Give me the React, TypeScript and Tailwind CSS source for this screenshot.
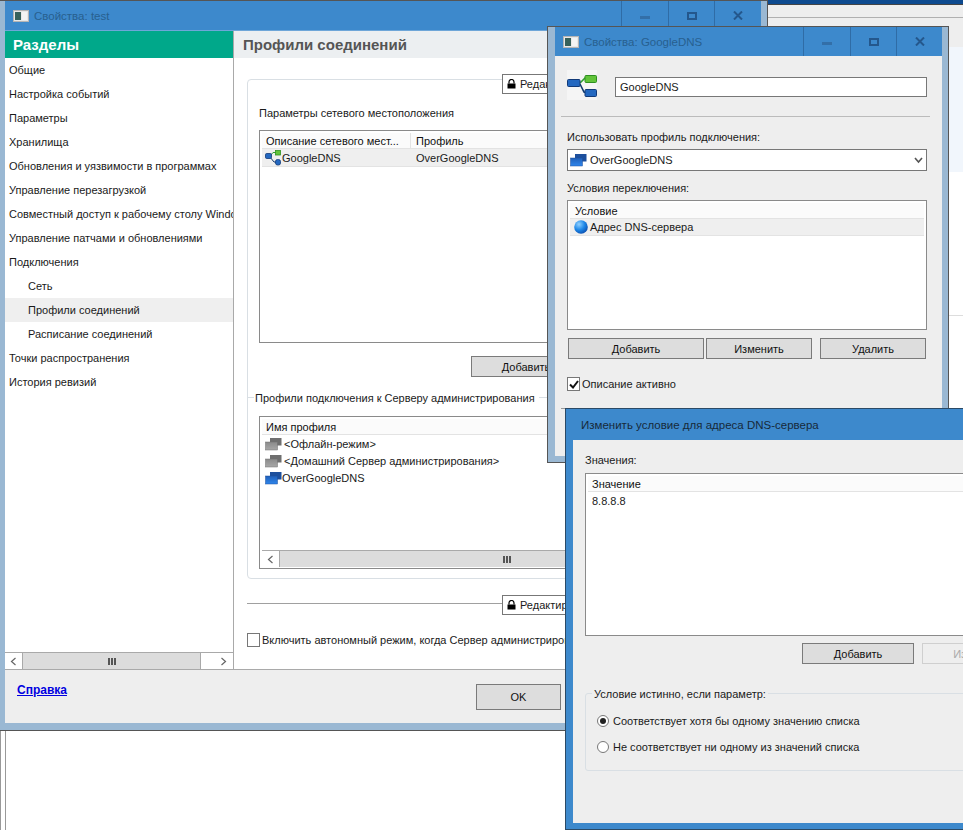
import type { ReactNode } from "react";

const font = "font-['Liberation_Sans','Noto_Sans',sans-serif]";

function NetIcon() {
  return (
    <svg width="16" height="16" viewBox="0 0 16 16" className="shrink-0">
      <path d="M5 6 L8 2.5 L11 2.5" fill="none" stroke="#2f9e2f" strokeWidth="1" />
      <path d="M5 7 L9 12 L11 12" fill="none" stroke="#123a6e" strokeWidth="1" />
      <rect x="0.5" y="3.5" width="6" height="5" rx="1.2" fill="#2468c0" stroke="#123a78" strokeWidth="0.8" />
      <rect x="10.5" y="0.5" width="5" height="4.5" fill="#62c43a" stroke="#2f8f22" strokeWidth="0.8" />
      <rect x="10.5" y="9.5" width="5" height="5.5" rx="2" fill="#2468c0" stroke="#123a78" strokeWidth="0.8" />
    </svg>
  );
}

function BigNetIcon() {
  return (
    <svg width="30" height="30" viewBox="0 0 30 30" className="shrink-0 bg-[#f5f5f5]">
      <path d="M13 13 L18 8 L20 8" fill="none" stroke="#2f9e2f" strokeWidth="1.6" />
      <path d="M13 14 L17 22 L20 23" fill="none" stroke="#123a6e" strokeWidth="1.6" />
      <rect x="0.5" y="9.5" width="12.5" height="7" rx="1" fill="#2468c0" stroke="#123a78" />
      <rect x="18" y="5.5" width="11.5" height="7" rx="1" fill="#62c43a" stroke="#2f8f22" />
      <rect x="18" y="19.5" width="11.5" height="7" rx="1" fill="#2468c0" stroke="#123a78" />
    </svg>
  );
}

function ProfileIcon({ gray = false }: { gray?: boolean }) {
  const id = gray ? "profile-gray" : "profile-blue";
  const back = gray ? "#6f6f6f" : "#1d4f9c";
  return (
    <svg width="17" height="14" viewBox="0 0 17 14" className="shrink-0">
      <defs>
        <linearGradient id={id} x1="0" y1="0" x2="0" y2="1">
          <stop offset="0%" stopColor={gray ? "#8a8a8a" : "#1f5fb8"} />
          <stop offset="100%" stopColor={gray ? "#a8a8a8" : "#2f86ec"} />
        </linearGradient>
      </defs>
      <rect x="5" y="1" width="11.5" height="7.5" fill={back} />
      <rect x="0.5" y="5" width="12" height="8" fill={`url(#${id})`} stroke={back} strokeWidth="0.5" />
    </svg>
  );
}

function Globe() {
  return (
    <svg width="14" height="14" viewBox="0 0 14 14" className="shrink-0">
      <defs>
        <radialGradient id="globe" cx="35%" cy="30%" r="75%">
          <stop offset="0%" stopColor="#8fd0ff" />
          <stop offset="55%" stopColor="#1e88e8" />
          <stop offset="100%" stopColor="#0b4fb0" />
        </radialGradient>
      </defs>
      <circle cx="7" cy="7" r="6.8" fill="url(#globe)" />
    </svg>
  );
}

function Lock() {
  return (
    <svg width="9" height="10" viewBox="0 0 9 10" className="shrink-0">
      <path d="M2 4.5V3a2.5 2.5 0 0 1 5 0v1.5" fill="none" stroke="#000" strokeWidth="1.2" />
      <rect x="0.5" y="4.5" width="8" height="5" fill="#000" />
    </svg>
  );
}

function Controls({ widths }: { widths: number[] }) {
  return (
    <div className="flex h-full">
      {["min", "max", "close"].map((kind, i) => (
        <div
          key={kind}
          style={{ width: widths[i] }}
          className="flex items-center justify-center border-l border-[#2f6ca6]"
        >
          {kind === "min" && <div className="mt-[3px] h-[3px] w-[10px] bg-[#336fa8]" />}
          {kind === "max" && <div className="h-[8px] w-[10px] border-2 border-[#24578c]" />}
          {kind === "close" && (
            <svg width="10" height="9" viewBox="0 0 10 9">
              <path d="M1 0.5 L9 8.5 M9 0.5 L1 8.5" stroke="#24578c" strokeWidth="2" />
            </svg>
          )}
        </div>
      ))}
    </div>
  );
}

function TitleIcon() {
  return (
    <div className="flex h-[12px] w-[16px] items-center gap-[1px] border border-[#b5b5b5] bg-[#e8e8e8] pl-[1px]">
      <div className="h-[8px] w-[6px] bg-[#37615a]" />
      <div className="h-[8px] w-[5px] bg-[#f4f4f4]" />
    </div>
  );
}

function Btn({ children, className = "" }: { children: ReactNode; className?: string }) {
  return (
    <div className={`flex shrink-0 items-center justify-center border border-[#7a7a7a] bg-[#dddddd] text-[#111] ${className}`}>
      {children}
    </div>
  );
}

function ListHead({ children, inset = "pl-[4px]" }: { children: ReactNode; inset?: string }) {
  return (
    <div className={`mx-[2px] mt-[2px] flex h-[16px] items-center border-b border-[#e3e3e3] bg-[#fbfbfb] text-[#111] ${inset}`}>
      {children}
    </div>
  );
}

function Arrow({ dir }: { dir: "l" | "r" }) {
  return (
    <svg width="7" height="9" viewBox="0 0 7 9">
      <path d={dir === "l" ? "M5.5 1 L1.5 4.5 L5.5 8" : "M1.5 1 L5.5 4.5 L1.5 8"} fill="none" stroke="#666" strokeWidth="1.2" />
    </svg>
  );
}

function Grip() {
  return (
    <div className="flex gap-[1px]">
      <div className="h-[7px] w-[2px] bg-[#555]" />
      <div className="h-[7px] w-[2px] bg-[#555]" />
      <div className="h-[7px] w-[2px] bg-[#555]" />
    </div>
  );
}

const sections = [
  "Общие",
  "Настройка событий",
  "Параметры",
  "Хранилища",
  "Обновления и уязвимости в программах",
  "Управление перезагрузкой",
  "Совместный доступ к рабочему столу Windows",
  "Управление патчами и обновлениями",
  "Подключения",
  "Сеть",
  "Профили соединений",
  "Расписание соединений",
  "Точки распространения",
  "История ревизий",
];

function MainWindow() {
  return (
    <div className="absolute left-0 top-0 flex h-[731px] w-[768px] flex-col border-r border-b border-t border-[#555] bg-[#9ab8d3] px-[5px] pb-[7px] pr-[6px]">
      <div className="flex h-[30px] shrink-0 items-center justify-between border-b border-[#6ea6d8] bg-[#3d89cc]">
        <div className="flex items-center gap-[5px] pl-[8px] text-[#28608f]">
          <TitleIcon />
          <span className="text-[11.5px]">Свойства: test</span>
        </div>
        <Controls widths={[47, 46, 47]} />
      </div>
      <div className="flex min-h-0 flex-1">
        <div className="flex w-[229px] shrink-0 flex-col border-r border-[#a9a9a9] bg-white">
          <div className="flex h-[27px] shrink-0 items-center bg-[#00a88a] pl-[8px] text-[15px] font-bold text-white">
            Разделы
          </div>
          <div className="min-h-0 flex-1 overflow-hidden">
            {sections.map((s, i) => (
              <div
                key={s}
                className={`flex h-[24px] items-center whitespace-nowrap ${i >= 9 && i <= 11 ? "pl-[23px]" : "pl-[4px]"} ${i === 10 ? "bg-[#efefef]" : ""}`}
              >
                {s}
              </div>
            ))}
          </div>
          <div className="flex h-[17px] shrink-0 items-center border-t border-[#a9a9a9]">
            <div className="flex w-[17px] justify-center"><Arrow dir="l" /></div>
            <div className="flex h-full w-[179px] items-center justify-center border-x border-[#a9a9a9] bg-[#dcdcdc]"><Grip /></div>
            <div className="w-[14px]" />
            <div className="flex w-[17px] justify-center"><Arrow dir="r" /></div>
          </div>
        </div>
        <div className="flex min-w-0 flex-1 flex-col bg-white">
          <div className="flex h-[27px] shrink-0 items-center bg-[#eceff1] pl-[9px] text-[15px] font-bold text-[#555]">
            Профили соединений
          </div>
          <div className="relative mx-[13px] mt-[21px] h-[500px] shrink-0 rounded-[4px] border border-[#d9dfe4] px-[11px]">
            <div className="absolute left-[254px] top-[-6px] flex h-[20px] w-[120px] items-center gap-[4px] border border-[#777] bg-white pl-[4px]">
              <Lock />
              <span>Редактировать</span>
            </div>
            <div className="pt-[25px]">Параметры сетевого местоположения</div>
            <div className="mt-[9px] h-[213px] border border-[#8a8a8a]">
              <ListHead>
                <span className="w-[145px] whitespace-nowrap border-r border-[#e3e3e3]">Описание сетевого мест...</span>
                <span className="pl-[5px]">Профиль</span>
              </ListHead>
              <div className="mx-[2px] flex h-[18px] items-center border-b border-[#e3e3e3] bg-[#efefef] pl-[3px]">
                <NetIcon />
                <span className="ml-[1px] w-[134px]">GoogleDNS</span>
                <span>OverGoogleDNS</span>
              </div>
            </div>
            <Btn className="ml-[212px] mt-[13px] h-[21px] w-[110px]">Добавить</Btn>
            <div className="relative mt-[20px] h-0 -mx-[11px] border-t border-[#d9dfe4]">
              <span className="absolute left-[6px] top-[-8px] bg-white pr-[4px] pl-[1px] whitespace-nowrap">
                Профили подключения к Серверу администрирования
              </span>
            </div>
            <div className="mt-[18px] flex h-[153px] flex-col border border-[#8a8a8a]">
              <ListHead>Имя профиля</ListHead>
              <div className="flex flex-1 flex-col pl-[5px]">
                <div className="flex h-[17px] items-center gap-[2px]"><ProfileIcon gray /><span>&lt;Офлайн-режим&gt;</span></div>
                <div className="flex h-[17px] items-center gap-[2px]"><ProfileIcon gray /><span>&lt;Домашний Сервер администрирования&gt;</span></div>
                <div className="flex h-[17px] items-center"><ProfileIcon /><span>OverGoogleDNS</span></div>
              </div>
              <div className="mx-[2px] mb-[1px] flex h-[17px] items-center border-t border-[#a9a9a9]">
                <div className="flex w-[17px] justify-center"><Arrow dir="l" /></div>
                <div className="flex h-full flex-1 items-center justify-center border-l border-[#a9a9a9] bg-[#dcdcdc]"><Grip /></div>
              </div>
            </div>
          </div>
          <div className="relative mx-[13px] mt-[24px] h-0 border-t border-[#a0a0a0]">
            <div className="absolute left-[255px] top-[-9px] flex h-[20px] w-[120px] items-center gap-[4px] border border-[#777] bg-white pl-[4px]">
              <Lock />
              <span>Редактировать</span>
            </div>
          </div>
          <div className="ml-[13px] mt-[28px] flex items-center gap-[2px] whitespace-nowrap">
            <div className="h-[14px] w-[13px] border border-[#777] bg-white" />
            <span>Включить автономный режим, когда Сервер администрирования недоступен</span>
          </div>
        </div>
      </div>
      <div className="flex h-[54px] shrink-0 border-t border-[#a9a9a9] bg-[#eeeeee]">
        <a className="ml-[12px] mt-[12px] text-[12px] font-bold text-[#0000e0] underline">Справка</a>
        <Btn className="ml-auto mr-[200px] mt-[14px] h-[26px] w-[85px]">OK</Btn>
      </div>
    </div>
  );
}

function DnsWindow() {
  return (
    <div className="absolute left-[547px] top-[26px] flex h-[437px] w-[402px] flex-col border border-[#555] bg-[#9ab8d3] px-[7px] pb-[6px] pr-[6px]">
      <div className="flex h-[29px] shrink-0 items-center justify-between bg-[#3d89cc]">
        <div className="flex items-center gap-[5px] pl-[8px] text-[#28608f]">
          <TitleIcon />
          <span className="text-[11.5px]">Свойства: GoogleDNS</span>
        </div>
        <Controls widths={[47, 46, 46]} />
      </div>
      <div className="min-h-0 flex-1 bg-[#eeeeee] px-[12px] pt-[14px]">
        <div className="flex h-[30px] items-start">
          <BigNetIcon />
          <div className="ml-[18px] mt-[7px] flex h-[20px] w-[312px] items-center border border-[#777] bg-white pl-[4px]">GoogleDNS</div>
        </div>
        <div className="-ml-[6px] mt-[16px] h-0 w-[369px] border-t border-[#bbb]" />
        <div className="mt-[12px]">Использовать профиль подключения:</div>
        <div className="mt-[4px] flex h-[22px] w-[360px] items-center justify-between border border-[#777] bg-white pl-[2px] pr-[3px]">
          <div className="flex items-center gap-[3px]"><ProfileIcon /><span>OverGoogleDNS</span></div>
          <svg width="9" height="7" viewBox="0 0 9 7"><path d="M1 1 L4.5 5 L8 1" fill="none" stroke="#555" strokeWidth="1.6" /></svg>
        </div>
        <div className="mt-[9px]">Условия переключения:</div>
        <div className="mt-[4px] h-[130px] w-[360px] border border-[#8a8a8a] bg-white">
          <ListHead inset="pl-[5px]">Условие</ListHead>
          <div className="mx-[2px] flex h-[17px] items-center gap-[2px] border-b border-[#e3e3e3] bg-[#efefef] pl-[4px]">
            <Globe />
            <span>Адрес DNS-сервера</span>
          </div>
        </div>
        <div className="ml-[1px] mt-[8px] flex gap-[2px]">
          <Btn className="h-[21px] w-[136px]">Добавить</Btn>
          <Btn className="h-[21px] w-[106px]">Изменить</Btn>
          <Btn className="ml-[6px] h-[21px] w-[106px]">Удалить</Btn>
        </div>
        <div className="mt-[17px] flex items-center gap-[2px]">
          <div className="flex h-[14px] w-[13px] items-center justify-center border border-[#777] bg-white">
            <svg width="10" height="9" viewBox="0 0 10 9"><path d="M1 4.5 L4 7.5 L9 1" fill="none" stroke="#111" strokeWidth="2" /></svg>
          </div>
          <span>Описание активно</span>
        </div>
        <div className="-ml-[6px] mt-[16px] h-0 w-[369px] border-t border-[#999]" />
      </div>
    </div>
  );
}

function ConditionWindow() {
  return (
    <div className="absolute left-[565px] top-[408px] flex h-[422px] w-[420px] flex-col border border-[#2b4a66] bg-[#3d89cc] pb-[6px] pl-[7px]">
      <div className="flex h-[31px] shrink-0 items-center pl-[8px] text-[11.5px] text-[#17293a]">
        Изменить условие для адреса DNS-сервера
      </div>
      <div className="min-h-0 flex-1 bg-[#eeeeee] pl-[12px] pt-[12px]">
        <div>Значения:</div>
        <div className="mt-[5px] h-[163px] border border-[#8a8a8a] bg-white">
          <ListHead>Значение</ListHead>
          <div className="pl-[6px] pt-[1px]">8.8.8.8</div>
        </div>
        <div className="ml-[217px] mt-[7px] flex gap-[8px]">
          <Btn className="h-[21px] w-[112px]">Добавить</Btn>
          <div className="flex h-[21px] w-[112px] shrink-0 items-center justify-center border border-[#cfcfcf] text-[#aaa]">Изменить</div>
        </div>
        <div className="relative mt-[29px] h-[78px] rounded-[3px] border border-[#d9dfe4] pl-[11px] pt-[19px]">
          <span className="absolute left-[6px] top-[-8px] bg-[#eeeeee] px-[2px]">Условие истинно, если параметр:</span>
          <div className="flex h-[16px] items-center gap-[4px]">
            <div className="flex h-[12px] w-[12px] items-center justify-center rounded-full border border-[#777] bg-white">
              <div className="h-[6px] w-[6px] rounded-full bg-[#222]" />
            </div>
            <span>Соответствует хотя бы одному значению списка</span>
          </div>
          <div className="mt-[10px] flex h-[16px] items-center gap-[4px]">
            <div className="h-[12px] w-[12px] rounded-full border border-[#777] bg-white" />
            <span>Не соответствует ни одному из значений списка</span>
          </div>
        </div>
      </div>
    </div>
  );
}

export default function App() {
  return (
    <div className={`relative h-[830px] w-[963px] overflow-hidden bg-white text-[11px] leading-[16px] text-[#1a1a1a] ${font}`}>
      {/* окно позади */}
      <div className="absolute left-[610px] top-0 h-[5px] w-[353px] border-b border-[#444] bg-[#0d4a8f]" />
      <div className="absolute left-[768px] top-[5px] h-[42px] w-[195px] bg-[#eeeeee]">
        <div className="mt-[12px] h-[1px] bg-[#b0b0b0]" />
      </div>
      <div className="absolute left-[948px] top-[47px] h-[125px] w-[15px] bg-[#f1f6fc]" />
      <div className="absolute left-[948px] top-[315px] h-[1px] w-[15px] bg-[#ddd]" />
      <div className="absolute left-0 top-[731px] h-[99px] w-[6px] border-x border-[#999]" />
      <MainWindow />
      <DnsWindow />
      <ConditionWindow />
    </div>
  );
}
